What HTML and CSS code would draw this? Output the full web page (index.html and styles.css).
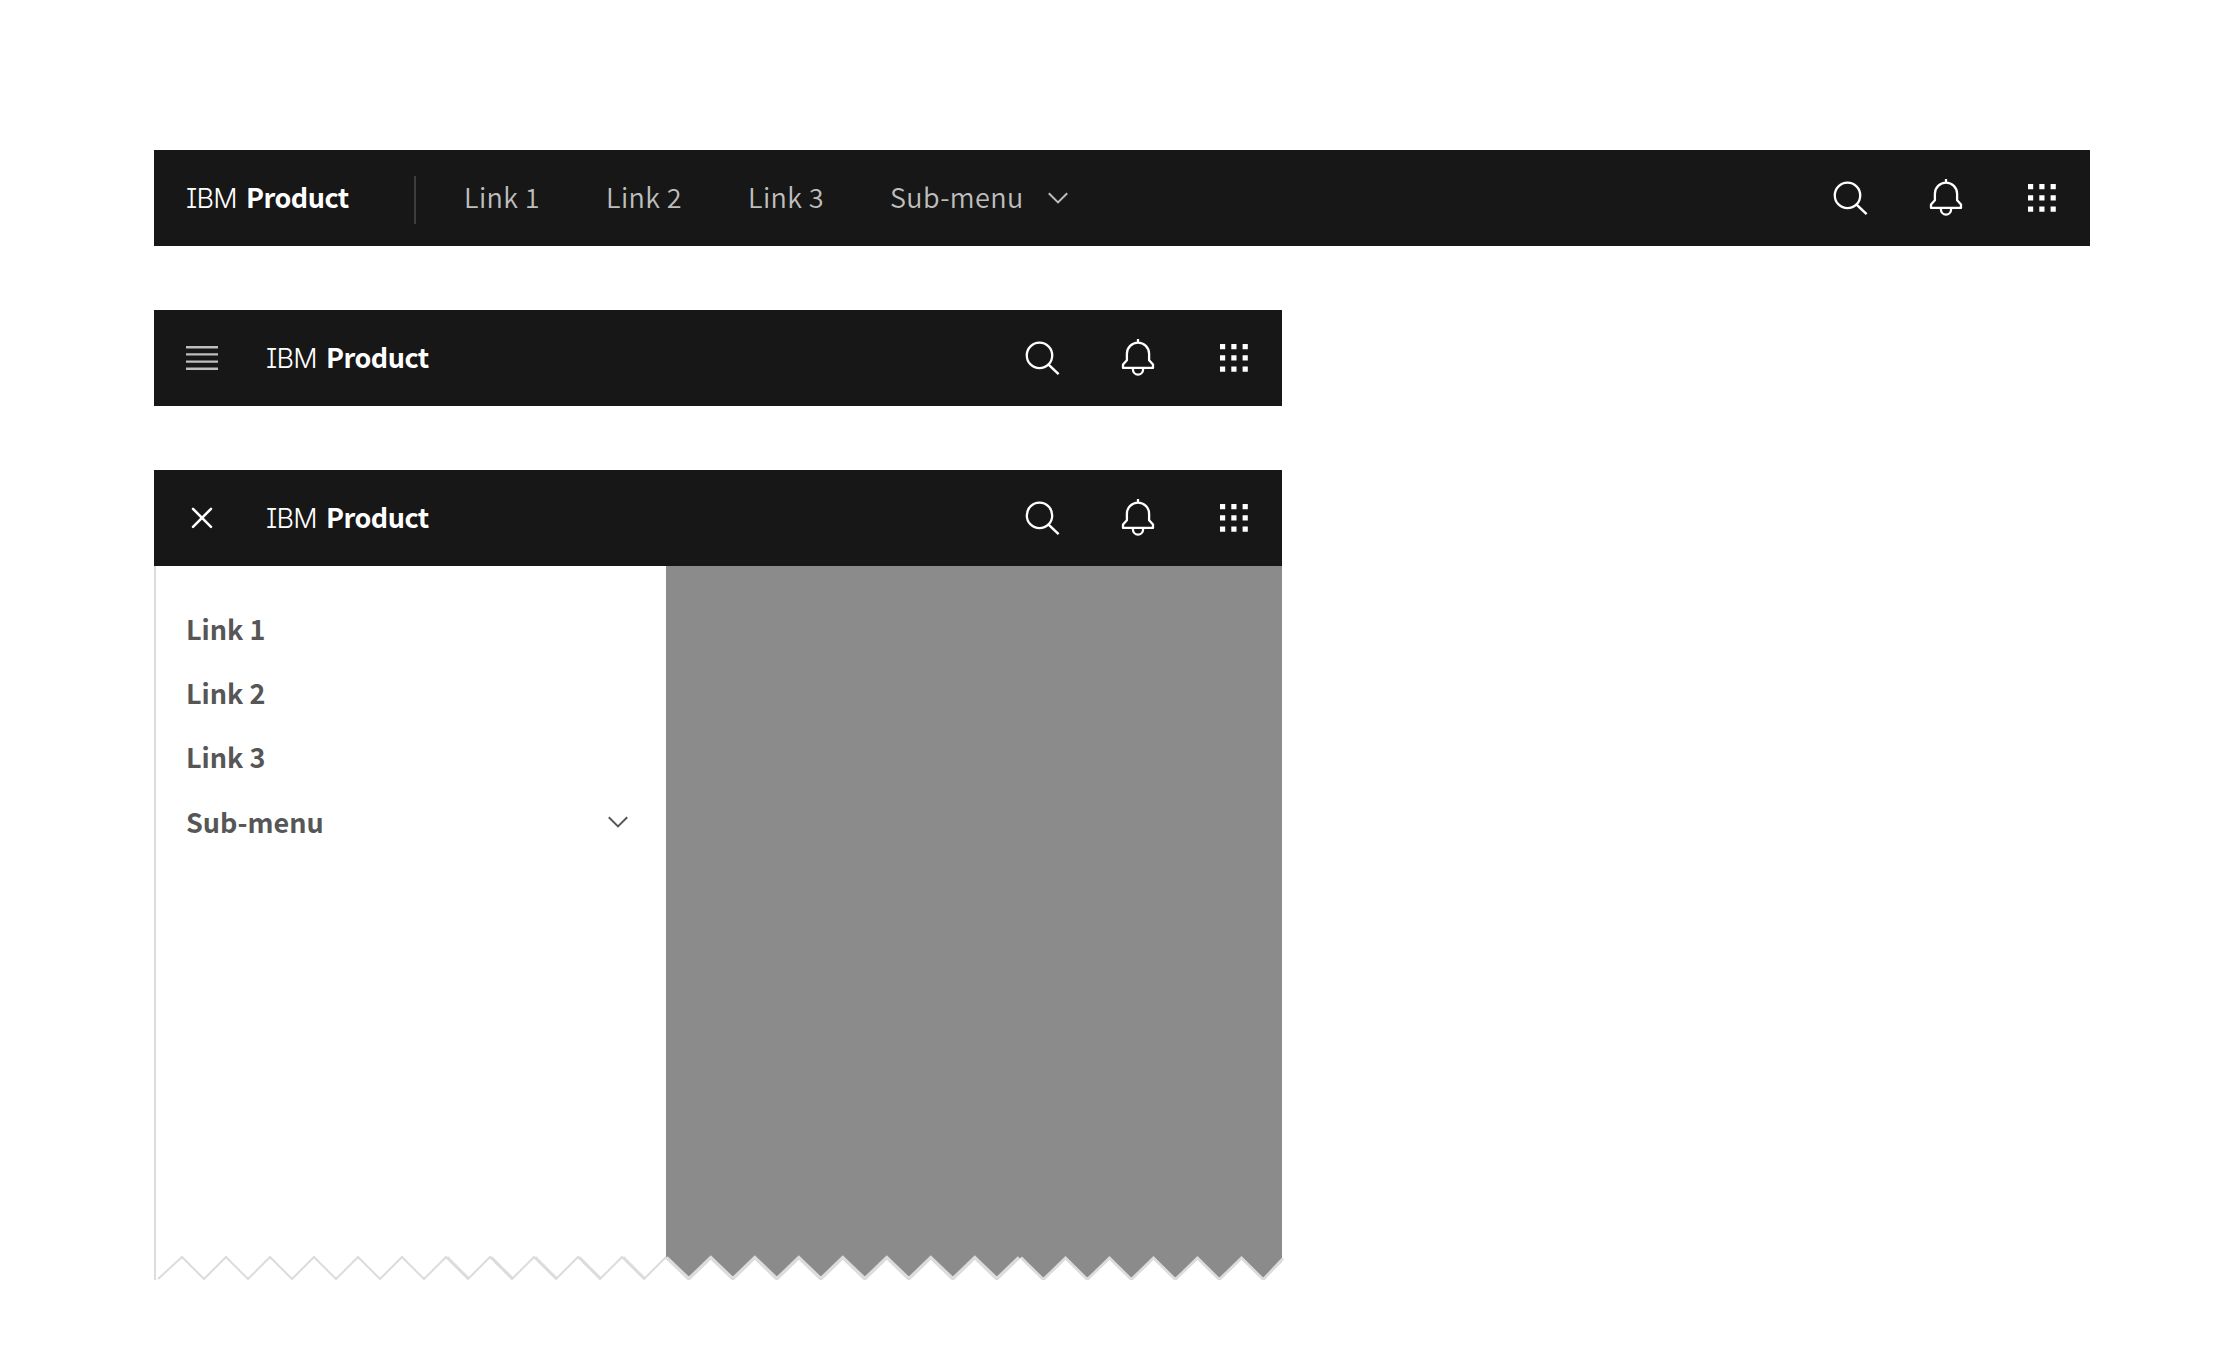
FILE: index.html
```html
<!DOCTYPE html>
<html lang="en">
<head>
<meta charset="utf-8">
<title>IBM Product header</title>
<link rel="stylesheet" href="styles.css">
</head>
<body>
<svg class="sprite" aria-hidden="true">
  <symbol id="search" viewBox="0 0 40 40"><circle cx="17.5" cy="17.4" r="12.7" fill="none" stroke="currentColor" stroke-width="2.3"/><path d="M26.3 26.3 36.6 36.2" fill="none" stroke="currentColor" stroke-width="2.5"/></symbol>
  <symbol id="bell" viewBox="0 0 40 40"><path d="M20 1v3.3M8.9 15.7a11.1 11.1 0 0 1 22.2 0v6.6l3.9 4.2v3.4H5v-3.4l3.900-4.200zM14.900 30v1.200a5.100 5.400 0 0 0 10.200 0v-1.200" fill="none" stroke="currentColor" stroke-width="2.3" stroke-linejoin="round"/></symbol>
  <symbol id="grid" viewBox="0 0 40 40"><path d="M6 6h5.2v5.2H6zm11.3 0h5.2v5.2h-5.2zm11.3 0h5.2v5.2h-5.2zM6 17.2h5.2v5.2H6zm11.3 0h5.2v5.2h-5.2zm11.3 0h5.2v5.2h-5.2zM6 28.5h5.2v5.2H6zm11.3 0h5.2v5.2h-5.2zm11.3 0h5.2v5.2h-5.2z" fill="currentColor"/></symbol>
  <symbol id="chevron" viewBox="0 0 20 12"><path d="M.8 1.2 10 10.4 19.2 1.2" fill="none" stroke="currentColor" stroke-width="2"/></symbol>
</svg>
<main class="page">
  <header class="bar bar-wide">
    <div class="brand"><span class="brand-prefix">IBM</span><span class="brand-name">Product</span></div>
    <span class="divider"></span>
    <nav class="links">
      <a>Link 1</a><a>Link 2</a><a>Link 3</a>
      <a>Sub-menu</a>
    </nav>
    <svg class="chevron bar-chevron"><use href="#chevron"/></svg>
    <div class="actions"><svg><use href="#search"/></svg><svg><use href="#bell"/></svg><svg><use href="#grid"/></svg></div>
  </header>
  <header class="bar">
    <svg class="toggle menu" viewBox="0 0 32 24"><path d="M0 1.2h32M0 8.4h32M0 15.6h32M0 22.8h32" stroke="currentColor" stroke-width="2.4"/></svg>
    <div class="brand"><span class="brand-prefix">IBM</span><span class="brand-name">Product</span></div>
    <div class="actions"><svg><use href="#search"/></svg><svg><use href="#bell"/></svg><svg><use href="#grid"/></svg></div>
  </header>
  <section class="open">
    <header class="bar">
      <svg class="toggle" viewBox="0 0 32 24"><path d="M7 2.8 25 20.8M25 2.8 7 20.8" stroke="currentColor" stroke-width="2.5" stroke-linecap="round"/></svg>
      <div class="brand"><span class="brand-prefix">IBM</span><span class="brand-name">Product</span></div>
      <div class="actions"><svg><use href="#search"/></svg><svg><use href="#bell"/></svg><svg><use href="#grid"/></svg></div>
    </header>
    <div class="body">
      <nav class="drawer">
        <a>Link 1</a><a>Link 2</a><a>Link 3</a>
        <a class="submenu">Sub-menu<svg class="chevron"><use href="#chevron"/></svg></a>
      </nav>
      <div class="scrim"></div>
      <svg class="tear" viewBox="0 0 1132 28">
        <path class="tear-fill" d="M2 30V27H4L28 5 50 27 72 5 94 27 116 5 138 27 160 5 182 27 204 5 226 27 248 5 270 27 292.5 5 314.5 27 336.5 5 358.5 27 380.5 5 402.5 27 424.5 5 446.5 27 468.5 5 490.5 27 512.5 5 534.8 27 556.8 5 578.8 27 600.8 5 622.8 27 644.8 5 666.8 27 688.8 5 710.8 27 732.8 5 754.8 27 776.8 5 798.8 27 820.8 5 842.8 27 867 5.5 889.3 27.5 911.5 5.5 933.3 27.5 955.5 5.5 977.3 27.5 999.5 5.5 1021.3 27.5 1043.5 5.5 1065.3 27.5 1087.5 5.5 1109.3 27.5 1132 6V32H2z"/>
        <path class="tear-line" d="M4 27 28 5 50 27 72 5 94 27 116 5 138 27 160 5 182 27 204 5 226 27 248 5 270 27 292 5 314 27 336 5 358 27 380 5 402 27 424 5 446 27 468 5 490 27 512 5"/>
        <path class="tear-line" d="M293.5 5 315 26.5M337.5 5 359 26.5M381.5 5 403 26.5M425.5 5 447 26.5M469.5 5 491 26.5"/>
        <path class="tear-line tear-line-thick" d="M512.5 5.5 534.8 26.8 556.8 5.5 578.8 26.8 600.8 5.5 622.8 26.8 644.8 5.5 666.8 26.8 688.8 5.5 710.8 26.8 732.8 5.5 754.8 26.8 776.8 5.5 798.8 26.8 820.8 5.5 842.8 26.8 865 5.5"/>
        <path class="tear-line tear-line-medium" d="M867 5.5 889.3 27.5 911.5 6 933.3 27.5 955.5 6 977.3 27.5 999.5 6 1021.3 27.5 1043.5 6 1065.3 27.5 1087.5 6 1109.3 27.5 1129 6.5"/>
      </svg>
    </div>
  </section>
</main>
</body>
</html>
```
FILE: styles.css
```css
* { box-sizing: border-box; }
body { margin: 0; background: #fff; font: 400 27px/40px "Noto Sans CJK SC", "Inter", sans-serif; color: #fff; }
.sprite { display: none; }
.page { padding: 150px 150px 74px 154px; display: flex; flex-direction: column; gap: 64px; }
.bar { width: 1128px; height: 96px; padding: 0 32px; background: #171717; display: flex; align-items: center; }
.bar-wide { width: 1936px; }
.brand { display: flex; align-items: baseline; padding-bottom: 1px; }
.brand-prefix { width: 60px; font-family: "Inter", sans-serif; font-weight: 300; letter-spacing: -0.8px; font-feature-settings: "cv08"; }
.brand-name { font-weight: 600; letter-spacing: -0.5px; }
.bar-wide .brand { width: 228px; }
.divider { width: 2px; height: 48px; margin-top: 4px; background: #3d3d3d; }
.links { display: grid; grid-template-columns: repeat(3, 142px) auto; padding: 0 0 3px 48px; color: #bebebe; font-weight: 350; letter-spacing: 0.4px; }
.bar-chevron { margin-left: 24px; color: #bebebe; }
.chevron { width: 20px; height: 12px; }
.actions { display: flex; gap: 56px; margin-left: auto; margin-right: -4px; }
.actions svg { width: 40px; height: 40px; }
.toggle { width: 32px; height: 24px; margin-right: 48px; }
.menu { color: #bebebe; }
.body { position: relative; width: 1128px; height: 714px; display: flex; }
.drawer { width: 512px; padding: 32px 38px 0 30px; border-left: 2px solid #dcdcdc; color: #565656; font-weight: 600; display: flex; flex-direction: column; }
.drawer a { height: 64px; line-height: 62px; }
.submenu { display: flex; align-items: center; justify-content: space-between; }
.scrim { flex: 1; background: #8b8b8b; }
.tear { position: absolute; left: 0; bottom: 0; width: 1132px; height: 28px; }
.tear-fill { fill: #fff; }
.tear-line { fill: none; stroke: #dcdcdc; stroke-width: 2; }
.tear-line-thick { stroke-width: 3.4; }
.tear-line-medium { stroke-width: 2.8; }
```
